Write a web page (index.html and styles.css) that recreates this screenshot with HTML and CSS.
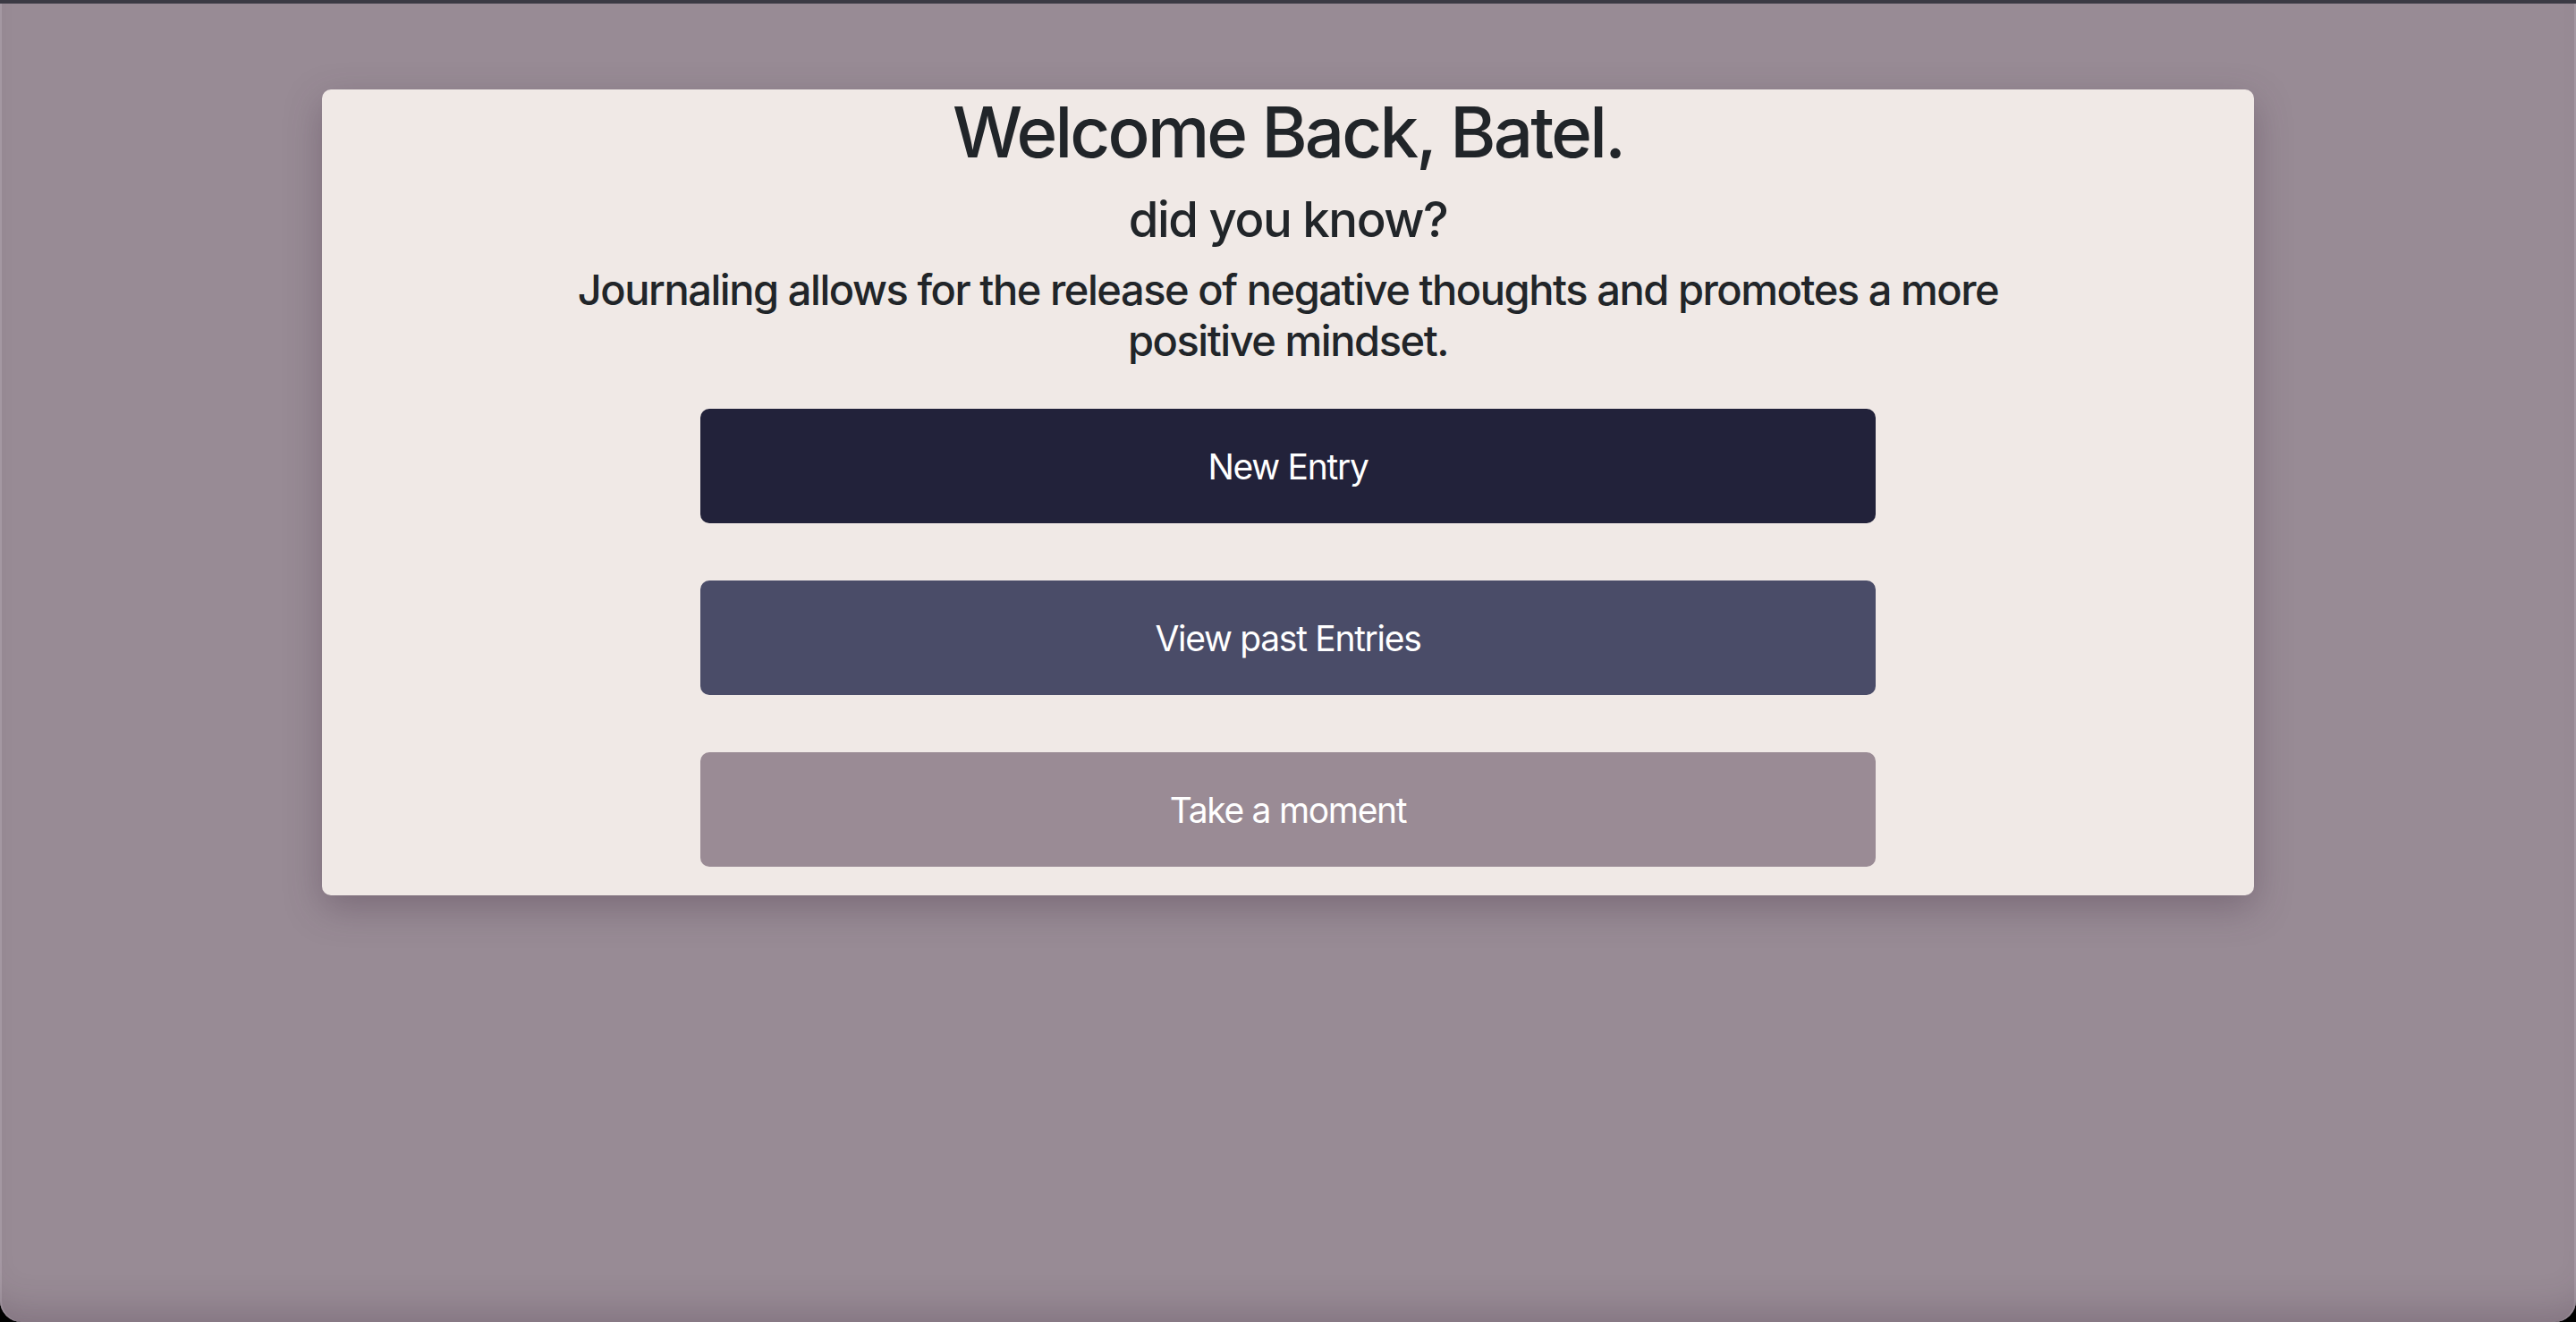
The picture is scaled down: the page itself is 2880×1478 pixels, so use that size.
FILE: index.html
```html
<!DOCTYPE html>
<html lang="en">
<head>
<meta charset="utf-8">
<title>Journal</title>
<link rel="stylesheet" href="styles.css">
</head>
<body>
<div class="screen">
  <main class="card">
    <h1 class="title">Welcome Back, Batel.</h1>
    <h3 class="subtitle">did you know?</h3>
    <h4 class="fact">Journaling allows for the release of negative thoughts and promotes a more positive mindset.</h4>
    <div class="actions">
      <button class="btn btn-dark">New Entry</button>
      <button class="btn btn-mid">View past Entries</button>
      <button class="btn btn-light">Take a moment</button>
    </div>
  </main>
</div>
</body>
</html>
```
FILE: styles.css
```css
html, body {
  margin: 0;
  padding: 0;
  height: 100%;
}
body {
  background: #000;
  font-family: Inter, "Noto Sans", "Liberation Sans", sans-serif;
  color: #212529;
}
.screen {
  position: relative;
  height: 1478px;
  box-sizing: border-box;
  background: #988b95;
  border-top: 4px solid #3b3a44;
  border-radius: 0 0 24px 24px;
  padding-top: 96px;
  box-shadow: inset 0 -40px 40px -30px rgba(60, 40, 60, 0.25), inset 2px 0 0 #a79ba5, inset -2px 0 0 #a79ba5;
}
.card {
  width: 2160px;
  margin: 0 auto;
  background: #f0e9e6;
  border-radius: 10px;
  box-shadow: 0 14px 40px rgba(70, 50, 70, 0.35);
  display: flex;
  flex-direction: column;
  align-items: center;
  text-align: center;
}
.title {
  margin: 0 0 16px;
  font-size: 78px;
  font-weight: 500;
  line-height: 96px;
  letter-spacing: -2.8px;
}
.subtitle {
  margin: 0 0 16px;
  font-size: 54.5px;
  font-weight: 500;
  line-height: 67px;
  letter-spacing: -1.45px;
}
.fact {
  margin: 0 0 16px;
  max-width: 1700px;
  font-size: 47px;
  font-weight: 500;
  line-height: 57px;
  letter-spacing: -1.45px;
}
.actions {
  width: 1314px;
  display: flex;
  flex-direction: column;
  gap: 64px;
  padding: 32px 0;
}
.btn {
  height: 128px;
  border: 0;
  border-radius: 10px;
  color: #fff;
  font-family: inherit;
  font-size: 39px;
  font-weight: 400;
  letter-spacing: -1.3px;
  cursor: pointer;
}
.btn-dark { background: #22223a; }
.btn-mid { background: #4a4c68; }
.btn-light { background: #9a8b95; }
```
